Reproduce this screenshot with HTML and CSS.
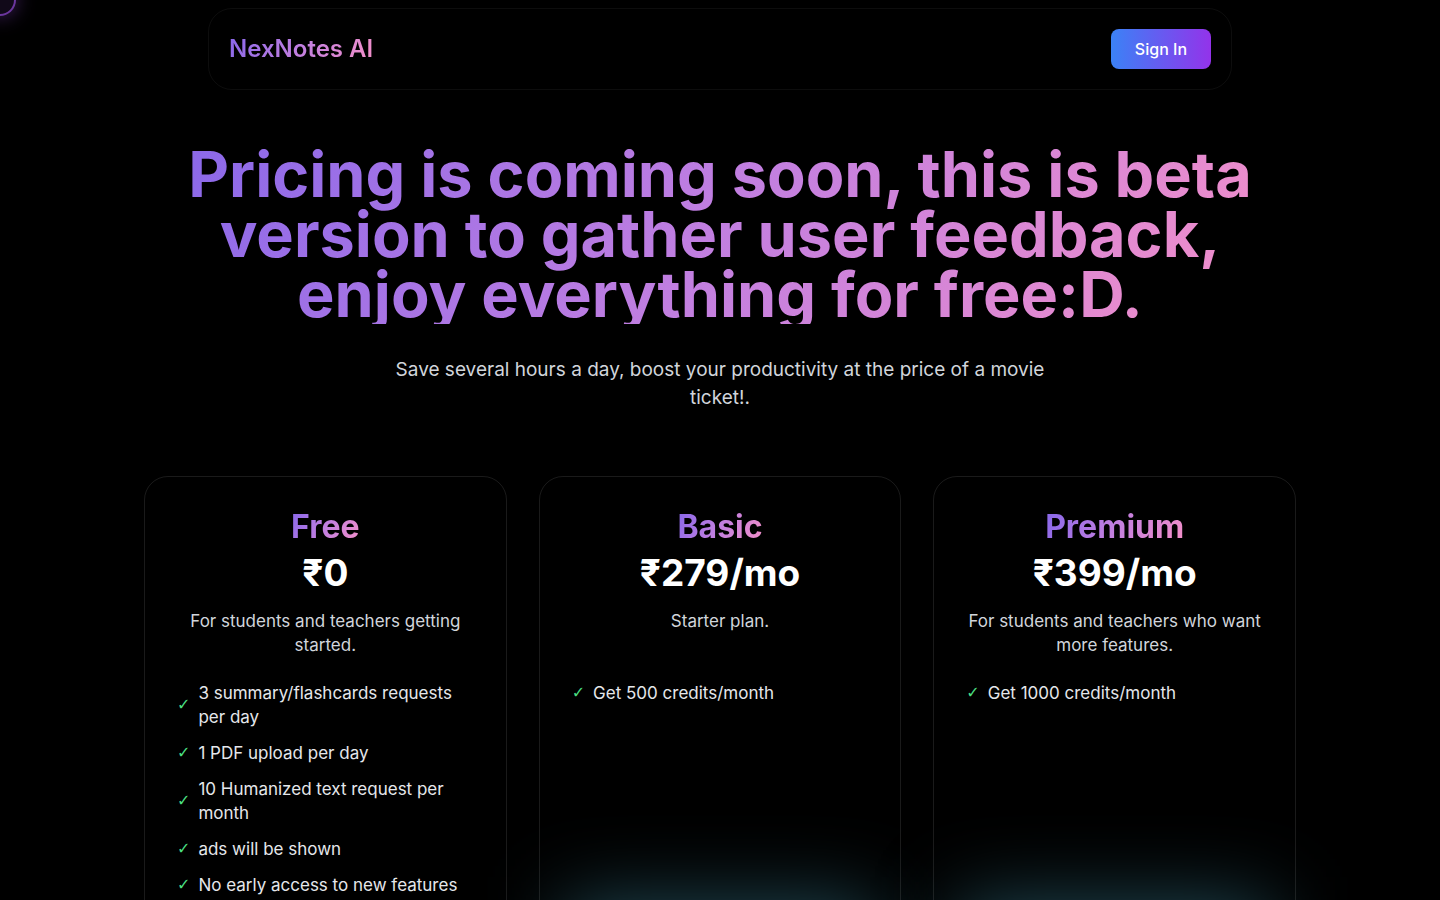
FILE: index.html
```html
<!DOCTYPE html>
<html lang="en">
<head>
    <meta charset="UTF-8">
    <meta name="viewport" content="width=device-width, initial-scale=1.0">
    <title>Pricing - NexNotes AI</title>
    <link rel="stylesheet" href="styles.css">
</head>
<body>
    <div class="cursor"></div>

    <header class="navbar">
        <a href="#" class="logo gradient-text">NexNotes AI</a>
        <button type="button" class="btn">Sign In</button>
    </header>

    <main class="pricing">
        <h1 class="gradient-text">Pricing is coming soon, this is beta version to gather user feedback, enjoy everything for free:D.</h1>
        <p class="subtitle">Save several hours a day, boost your productivity at the price of a movie ticket!.</p>

        <div class="plans">
            <section class="card">
                <h2 class="gradient-text">Free</h2>
                <p class="price">₹0</p>
                <p class="desc">For students and teachers getting started.</p>
                <ul class="features">
                    <li>3 summary/flashcards requests per day</li>
                    <li>1 PDF upload per day</li>
                    <li>10 Humanized text request per month</li>
                    <li>ads will be shown</li>
                    <li>No early access to new features</li>
                </ul>
            </section>

            <section class="card card-glow">
                <h2 class="gradient-text">Basic</h2>
                <p class="price">₹279/mo</p>
                <p class="desc">Starter plan.</p>
                <ul class="features">
                    <li>Get 500 credits/month</li>
                </ul>
            </section>

            <section class="card card-glow">
                <h2 class="gradient-text">Premium</h2>
                <p class="price">₹399/mo</p>
                <p class="desc">For students and teachers who want more features.</p>
                <ul class="features">
                    <li>Get 1000 credits/month</li>
                </ul>
            </section>
        </div>
    </main>
</body>
</html>
```
FILE: styles.css
```css
:root {
    --bg-color: #000;
    --text-color: #e5e7eb;
    --muted-color: #d1d5db;
    --border-color: rgba(255, 255, 255, 0.1);
}

* {
    margin: 0;
    padding: 0;
    box-sizing: border-box;
}

html {
    scrollbar-width: none;
}

body {
    font-family: Inter, sans-serif;
    background: var(--bg-color);
    color: var(--text-color);
    font-size: 17px;
    line-height: 24px;
    min-height: 100vh;
    overflow-x: hidden;
}

.gradient-text {
    background: linear-gradient(120deg, #8767ea, #c27fe0, #f590c8);
    -webkit-background-clip: text;
    background-clip: text;
    color: transparent;
}

.cursor {
    position: fixed;
    top: -16px;
    left: -16px;
    width: 32px;
    height: 32px;
    border: 2px solid rgba(168, 85, 247, 0.6);
    border-radius: 50%;
    background: rgba(168, 85, 247, 0.1);
    box-shadow: 0 0 20px rgba(168, 85, 247, 0.4);
    pointer-events: none;
}

.navbar {
    display: flex;
    align-items: center;
    justify-content: space-between;
    width: calc(100% - 32px);
    max-width: 1024px;
    margin: 8px auto 0;
    padding: 20px;
    border: 1px solid rgba(255, 255, 255, 0.05);
    border-radius: 24px;
}

.logo {
    font-size: 24px;
    line-height: 32px;
    font-weight: 600;
    text-decoration: none;
}

.btn {
    padding: 8px 24px;
    border: none;
    border-radius: 8px;
    background: linear-gradient(to right, #3b82f6, #9333ea);
    color: white;
    font: inherit;
    font-size: 16px;
    font-weight: 500;
    cursor: pointer;
}

.pricing {
    max-width: 1152px;
    margin: 0 auto;
    padding: 54px 0 80px;
    text-align: center;
}

h1 {
    font-size: 63px;
    line-height: 60px;
    font-weight: 700;
}

.subtitle {
    max-width: 672px;
    margin: 32px auto 64px;
    color: var(--muted-color);
    font-size: 19px;
    line-height: 28px;
}

.plans {
    display: grid;
    grid-template-columns: repeat(3, 1fr);
    gap: 32px;
}

.card {
    position: relative;
    min-height: 520px;
    padding: 32px;
    border: 1px solid var(--border-color);
    border-radius: 24px;
}

.card-glow::after {
    content: '';
    position: absolute;
    z-index: -1;
    left: 24px;
    right: 24px;
    bottom: 0;
    height: 92px;
    background: #224c58;
    filter: blur(40px);
}

h2 {
    width: fit-content;
    margin: 0 auto 8px;
    font-size: 32px;
    line-height: 36px;
    font-weight: 700;
}

.price {
    margin-bottom: 16px;
    color: white;
    font-size: 37px;
    line-height: 40px;
    font-weight: 700;
}

.desc {
    min-height: 48px;
    margin-bottom: 24px;
    color: var(--muted-color);
}

.features {
    display: grid;
    gap: 12px;
    list-style: none;
    text-align: left;
}

.features li {
    display: flex;
    align-items: center;
    gap: 8px;
}

.features li::before {
    content: '✓';
    color: #4ade80;
    font-family: "DejaVu Sans", sans-serif;
    font-size: 16px;
}

@media (max-width: 900px) {
    .pricing {
        padding: 48px 16px;
    }

    .plans {
        grid-template-columns: 1fr;
    }
}
```
